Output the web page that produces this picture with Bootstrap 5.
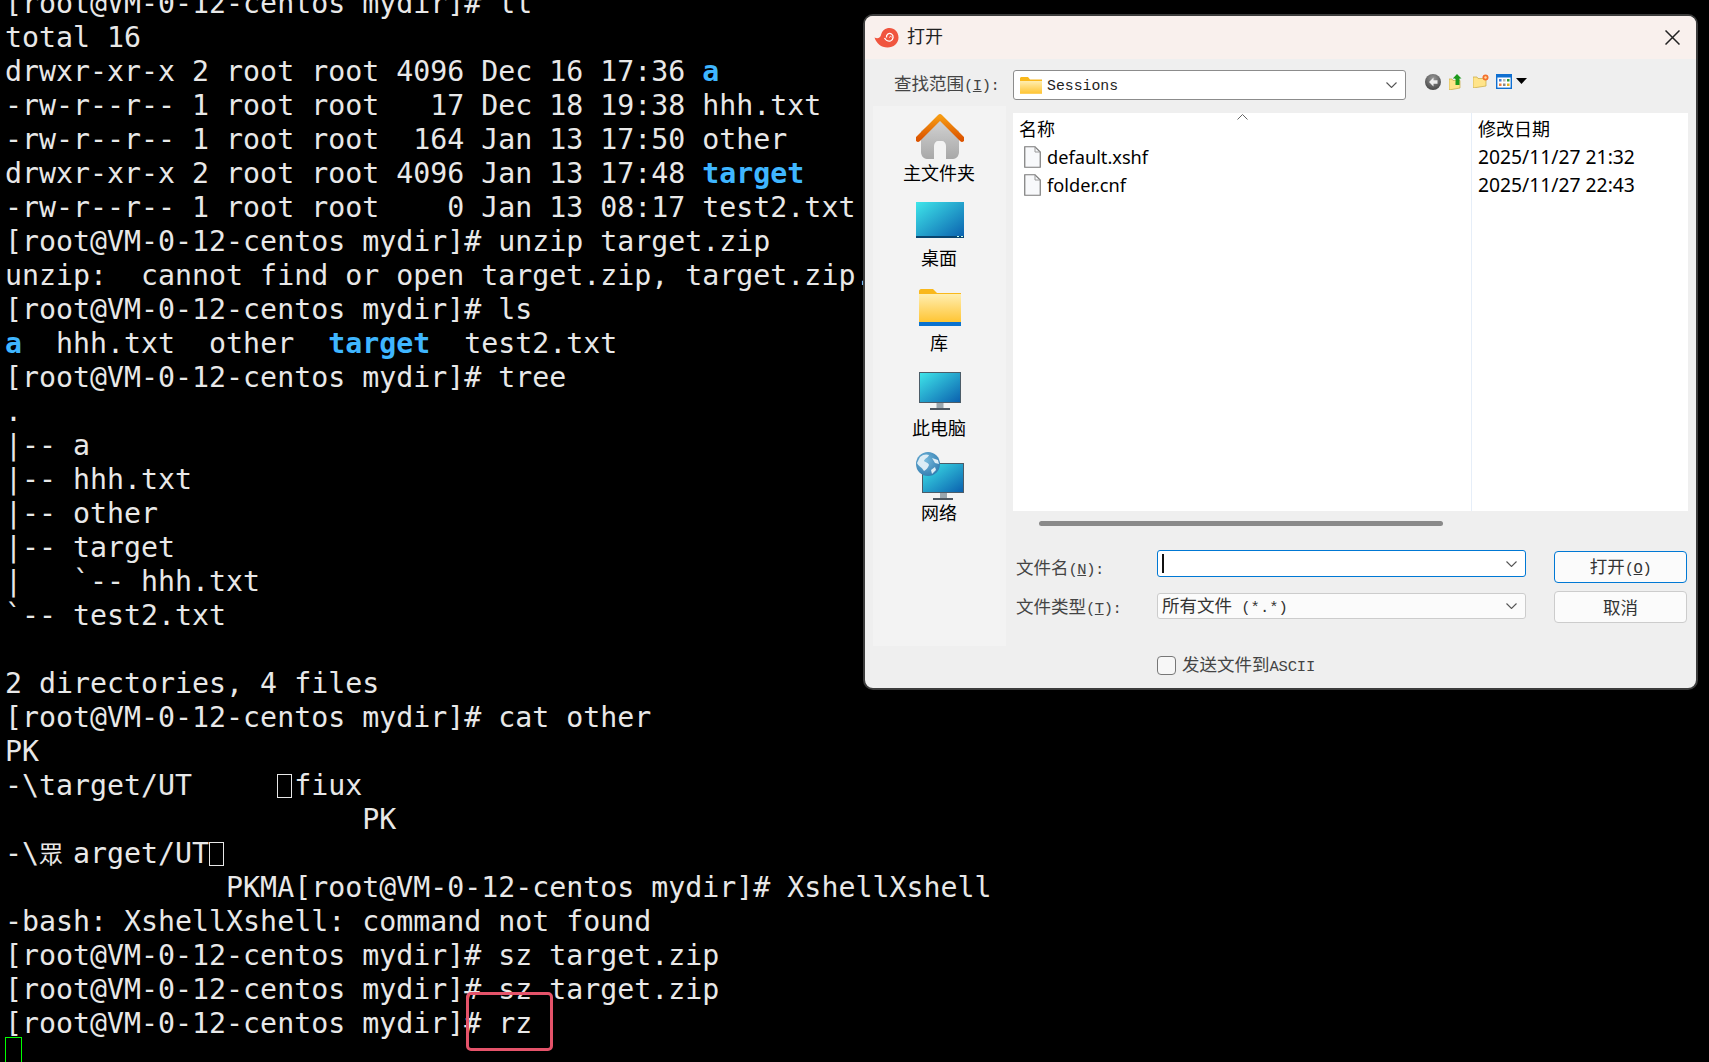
<!DOCTYPE html>
<html lang="zh">
<head>
<meta charset="utf-8">
<title>打开</title>
<link href="https://cdn.jsdelivr.net/npm/bootstrap@5.3.0/dist/css/bootstrap.min.css" rel="stylesheet">
<style>
html,body{margin:0;height:100%;background:#000;overflow:hidden}
.stage{position:relative;width:1709px;height:1062px;overflow:hidden;background:#000}
.term{margin:-13px 0 0 5px;padding:0;overflow:visible;font-family:"DejaVu Sans Mono","Liberation Mono",monospace;font-size:28.25px;line-height:34px;color:#e8e8e8;white-space:pre}
.term b{color:#3fb6ff;font-weight:700}
.tofu{display:inline-block;width:15px;height:24px;margin-right:2px;border:1.5px solid #e8e8e8;vertical-align:-3px}
.wide{display:inline-block;width:34px;font-family:"Noto Sans CJK SC",sans-serif;font-size:24px;line-height:1;text-align:left;vertical-align:0}
.cursor{display:block;width:17px;height:34px;margin:-4px 0 0 0;border:1px solid #0f0}
.redbox{position:absolute;left:466px;top:992px;width:87px;height:59px;border:3px solid #e5536a;border-radius:5px}
.dlg{position:absolute;left:863px;top:14px;width:835px;height:676px;border:2px solid #3c3c3c;border-radius:10px;background:#efefef;overflow:hidden;color:#000;font-family:"Noto Sans","Noto Sans CJK SC",sans-serif}
.titlebar{height:43px;background:#f9f0ed;padding:0 16px 0 9px;font-size:18px;color:#222}
.titlebar span{margin-left:8px;padding-bottom:5px;font-family:"Noto Sans CJK SC",sans-serif}
.lookup{height:47px;padding:11px 0 0 29px}
.lbl{font-family:"Noto Sans CJK SC",sans-serif;font-size:17.5px;color:#444;line-height:1;white-space:pre}
.lat{font-family:"Liberation Mono",monospace;font-size:15.5px;letter-spacing:-.5px}
.lookup .lbl{width:119px;padding-top:4px}
.combo{width:393px;height:30px;background:#fff;border:1.5px solid #8c8c8c;border-radius:3px;padding:0 8px 0 6px}
.combo .val{font-family:"Liberation Mono",monospace;font-size:14.8px;color:#222;margin-left:5px;padding-top:2px}
.tools{margin-left:19px;margin-top:4px;height:17px}
.t8{margin-left:8px}.t10{margin-left:10px}.t7{margin-left:7px}.t4{margin:4px 0 0 4px}
.mainrow{padding-left:8px;gap:7px}
.side{width:133px;height:540px;background:#f3f3f3;font-family:"Noto Sans CJK SC",sans-serif;font-size:18px;text-align:center}
.place{height:85px}
.place:first-child{height:80px}
.place svg{display:block}
.place div{line-height:25px;height:26px;padding-right:1px}
.gap1{margin-bottom:1px}.gap7{margin-bottom:7px}.gap4{margin-bottom:4px}.gap5{margin-bottom:5px}
.rightcol{width:675px;padding-top:7px}
.files{position:relative;height:398px;background:#fff}
.files .ncol{width:459px;border-right:1px solid #e6eef8;font-size:18.2px}
.files .dcol{padding-left:6px;flex:1;font-size:19.3px}
.hd{height:30px;line-height:30px;font-family:"Noto Sans CJK SC",sans-serif;font-size:18px}
.ncol .hd{padding-left:6px}
.frow{height:28px;line-height:28px;white-space:nowrap}
.ncol .frow{padding-left:11px}
.frow svg{margin-right:6px;flex:none}
.sortcaret{position:absolute;left:224px;top:1px}
.hscroll{width:404px;height:5px;margin:10px 0 0 26px;border-radius:3px;background:#8a8a8a}
.formarea{margin-top:24px;margin-left:3px}
.fcol{width:510px}
.frm{height:43px}
.frm .lbl{width:141px;padding-top:8px}
.frm.second .lbl{padding-top:4px}
.field{width:369px;height:27px;padding:0 8px 0 4px;border-radius:3px;background:#fff;border:1.5px solid #0078d4}
.field.sel{height:26px;background:#fbfbfb;border:1px solid #ccc;font-family:"Noto Sans CJK SC",sans-serif;font-size:17.5px;color:#333;white-space:pre}
.field.sel .lat{letter-spacing:0}
.caretline{display:block;width:1.5px;height:19px;background:#111}
.btncol{margin-left:28px;margin-top:1px;gap:8px;width:133px}
.winbtn{--bs-btn-padding-y:0;--bs-btn-padding-x:0;--bs-btn-border-radius:4px;--bs-btn-font-size:17.5px;--bs-btn-line-height:1;--bs-btn-bg:#fbfbfb;--bs-btn-color:#333;--bs-btn-border-color:#ccc;height:32px;font-family:"Noto Sans CJK SC",sans-serif}
.winbtn.primary{--bs-btn-border-color:#0078d4;border-width:1.5px}
.sendrow{margin:19px 0 0 144px}
.sendrow .form-check-input{width:19px;height:19px;margin:0 6px 0 0;border:1.5px solid #777;border-radius:4px;background-color:#f7f7f7}
.sendrow .lat{letter-spacing:-.2px}
</style>
</head>
<body>
<div class="stage">
<pre class="term">[root@VM-0-12-centos mydir]# ll
total 16
drwxr-xr-x 2 root root 4096 Dec 16 17:36 <b>a</b>
-rw-r--r-- 1 root root   17 Dec 18 19:38 hhh.txt
-rw-r--r-- 1 root root  164 Jan 13 17:50 other
drwxr-xr-x 2 root root 4096 Jan 13 17:48 <b>target</b>
-rw-r--r-- 1 root root    0 Jan 13 08:17 test2.txt
[root@VM-0-12-centos mydir]# unzip target.zip
unzip:  cannot find or open target.zip, target.zip.zip or target.zip.ZIP.
[root@VM-0-12-centos mydir]# ls
<b>a</b>  hhh.txt  other  <b>target</b>  test2.txt
[root@VM-0-12-centos mydir]# tree
.
|-- a
|-- hhh.txt
|-- other
|-- target
|   `-- hhh.txt
`-- test2.txt

2 directories, 4 files
[root@VM-0-12-centos mydir]# cat other
PK
-\target/UT     <span class="tofu"></span>fiux
                     PK
-\<span class="wide">眾</span>arget/UT<span class="tofu"></span>
             PKMA[root@VM-0-12-centos mydir]# XshellXshell
-bash: XshellXshell: command not found
[root@VM-0-12-centos mydir]# sz target.zip
[root@VM-0-12-centos mydir]# sz target.zip
[root@VM-0-12-centos mydir]# rz
<span class="cursor"></span></pre>
<div class="redbox"></div>

<svg width="0" height="0" class="position-absolute">
<defs>
<linearGradient id="scr" x1="0" y1="0" x2="1" y2="1"><stop offset="0" stop-color="#3fe6ea"/><stop offset="1" stop-color="#0a5fae"/></linearGradient>
<linearGradient id="fold" x1="0" y1="0" x2="0" y2="1"><stop offset="0" stop-color="#ffeeb0"/><stop offset="1" stop-color="#ffc534"/></linearGradient>
<linearGradient id="hous" x1="0" y1="0" x2="0" y2="1"><stop offset="0" stop-color="#d6d6d6"/><stop offset="1" stop-color="#a8a8a8"/></linearGradient>
<linearGradient id="roof" x1="0" y1="0" x2="0" y2="1"><stop offset="0" stop-color="#f59a12"/><stop offset="1" stop-color="#dc5400"/></linearGradient>
<radialGradient id="glob" cx=".4" cy=".35" r=".75"><stop offset="0" stop-color="#76b9dc"/><stop offset="1" stop-color="#2c77ac"/></radialGradient>
<radialGradient id="back" cx=".5" cy=".3" r=".8"><stop offset="0" stop-color="#999"/><stop offset="1" stop-color="#3c3c3c"/></radialGradient>
<symbol id="doc" viewBox="0 0 17 22"><path d="M.75.75H11L16.25 6V21.25H.75Z" fill="#f8f9fb" stroke="#7a7a7a" stroke-width="1.2"/><path d="M11 .75V6H16.25" fill="none" stroke="#9a9a9a" stroke-width="1"/></symbol>
<symbol id="chev" viewBox="0 0 11 6"><path d="M.5.5 5.5 5.5 10.500.5" fill="none" stroke="#555" stroke-width="1.1"/></symbol>
</defs>
</svg>

<div class="dlg d-flex flex-column">
  <div class="titlebar d-flex align-items-center flex-shrink-0">
    <svg width="25" height="20" viewBox="0 0 24 20"><path d="M0 9.500C3 11 6 10 6.500 7 7.500 2.500 11 0 15 0c5 0 9 4 9 9.500C24 15.500 19 19.500 13 19.500 6.500 19.500 2 15.500 0 9.500Z" fill="#f0553f"/><path d="M12 9.500C11.500 6.500 14.500 4.500 17 6 19.500 7.500 19 12 16 13 13.500 13.800 11 12 10 10" fill="none" stroke="#fff" stroke-width="1.300"/><path d="M15 9.500c0-1.500 2-1.500 2-.2" fill="none" stroke="#fff" stroke-width="1"/></svg>
    <span>打开</span>
    <svg class="ms-auto" width="15" height="15" viewBox="0 0 15 15"><path d="M.5.5 14.500 14.500M14.500.5.5 14.500" stroke="#222" stroke-width="1.500"/></svg>
  </div>

  <div class="lookup d-flex flex-shrink-0">
    <div class="lbl">查找范围<span class="lat">(<u>I</u>):</span></div>
    <div class="combo d-flex align-items-center">
      <svg width="22" height="17" viewBox="0 0 22 17"><path d="M0 1.500C0 .7.700 0 1.500 0H8L10 2.500H22V16.500H0Z" fill="#f9b81c"/><path d="M0 4H22V16.500H0Z" fill="url(#fold)"/></svg>
      <span class="val">Sessions</span>
      <svg class="ms-auto" width="11" height="6"><use href="#chev"/></svg>
    </div>
    <div class="tools d-flex align-items-start">
      <svg width="16" height="16" viewBox="0 0 16 16"><circle cx="8" cy="8" r="8" fill="url(#back)"/><path d="M8.500 3.500 4 8l4.500 4.500V9.700H12.500V6.300H8.500Z" fill="#eee"/></svg>
      <svg class="t8" width="14" height="16" viewBox="0 0 14 16"><path d="M0 5H3L4 6.500H11V14L0 16Z" fill="#ffe48a" stroke="#c9a93f" stroke-width=".7"/><path d="M8 0 12.500 4.500H10.500V11H6.500V8C6.500 6.500 7 5.500 6 4.500H3.800Z" fill="#1c9a1c"/></svg>
      <svg class="t10" width="16" height="14" viewBox="0 0 16 14"><path d="M0 3H4L5 4.500H13V12L0 14Z" fill="#ffe48a" stroke="#c9a93f" stroke-width=".7"/><circle cx="12.500" cy="3.500" r="3" fill="#f4702c"/><circle cx="12.500" cy="3.500" r="1.200" fill="#ffd9a0"/></svg>
      <svg class="t7" width="16" height="15" viewBox="0 0 16 15"><rect x=".7" y=".7" width="14.600" height="13.600" fill="#fff" stroke="#0f6fd1" stroke-width="1.400"/><rect x="1" y="1" width="14" height="2.500" fill="#0f6fd1"/><g fill="#4a7fd0"><rect x="3" y="5" width="2.500" height="2.500"/><rect x="3" y="9.500" width="2.500" height="2.500" fill="#f0803a"/><rect x="7" y="5" width="2.500" height="2.500" fill="#bbb"/><rect x="7" y="9.500" width="2.500" height="2.500" fill="#888"/><rect x="11" y="5" width="2.500" height="2.500" fill="#2a9a3a"/><rect x="11" y="9.500" width="2.500" height="2.500" fill="#e3b21e"/></g></svg>
      <svg class="t4" width="11" height="6" viewBox="0 0 11 6"><path d="M0 0H11L5.500 6Z" fill="#000"/></svg>
    </div>
  </div>

  <div class="mainrow d-flex align-items-start">
    <div class="side d-flex flex-column flex-shrink-0">
      <div class="place d-flex flex-column justify-content-end align-items-center">
        <svg class="gap1" width="48" height="45" viewBox="0 0 48 45"><path d="M5 17 24 3 43 17V38C43 41 41 45 37 45H30V32C30 29 28 27 26 27H22C20 27 18 29 18 32V45H11C7 45 5 41 5 38Z" fill="url(#hous)"/><path d="M2 25 24 3 46 25" fill="none" stroke="url(#roof)" stroke-width="5.500" stroke-linecap="round" stroke-linejoin="round"/></svg>
        <div>主文件夹</div>
      </div>
      <div class="place d-flex flex-column justify-content-end align-items-center">
        <svg class="gap7" width="48" height="36" viewBox="0 0 48 36"><rect width="48" height="36" fill="url(#scr)"/><rect y="34" width="48" height="2" fill="#08456f"/><rect x="41" y="34" width="2" height="1" fill="#cfe"/><rect x="45" y="34" width="2" height="1" fill="#cfe"/></svg>
        <div>桌面</div>
      </div>
      <div class="place d-flex flex-column justify-content-end align-items-center">
        <svg class="gap4" width="42" height="37" viewBox="0 0 42 37"><path d="M0 2C0 1 1 0 2 0H14L18 4H42V33H0Z" fill="#f9b81c"/><path d="M0 5H42V33H0Z" fill="url(#fold)"/><rect y="33" width="42" height="4" fill="#0a72cf"/></svg>
        <div>库</div>
      </div>
      <div class="place d-flex flex-column justify-content-end align-items-center">
        <svg class="gap5" width="42" height="38" viewBox="0 0 42 38"><rect x=".5" y=".5" width="41" height="30" fill="url(#scr)" stroke="#4c5c68"/><rect x="17.500" y="31" width="7" height="5" fill="#9aa6ae"/><rect x="11" y="36" width="20" height="2" fill="#4c5660"/></svg>
        <div>此电脑</div>
      </div>
      <div class="place d-flex flex-column justify-content-end align-items-center">
        <svg width="48" height="48" viewBox="0 0 48 48"><rect x="6.500" y="11.500" width="41" height="29" fill="url(#scr)" stroke="#4c5c68"/><rect x="24" y="41" width="7" height="5" fill="#9aa6ae"/><rect x="17" y="46" width="20" height="2" fill="#4c5660"/><circle cx="12" cy="12" r="12" fill="url(#glob)"/><path d="M4 5C7 2 11 2 13 3 12 6 9 6 8 9 10 11 12 10 13 13 12 16 10 18 8 19 6 15 2 14 1 11 2 9 3 7 4 5ZM16 6 22 8 23 12 19 11ZM15 18 19 15 20 18 16 22Z" fill="#dcecf5"/></svg>
        <div>网络</div>
      </div>
    </div>

    <div class="rightcol">
      <div class="files d-flex">
        <svg class="sortcaret" width="11" height="6" viewBox="0 0 11 6"><path d="M.5 5.500 5.500.5 10.500 5.500" fill="none" stroke="#666" stroke-width="1"/></svg>
        <div class="ncol">
          <div class="hd">名称</div>
          <div class="frow d-flex align-items-center"><svg width="17" height="22"><use href="#doc"/></svg>default.xshf</div>
          <div class="frow d-flex align-items-center"><svg width="17" height="22"><use href="#doc"/></svg>folder.cnf</div>
        </div>
        <div class="dcol">
          <div class="hd">修改日期</div>
          <div class="frow">2025/11/27 21:32</div>
          <div class="frow">2025/11/27 22:43</div>
        </div>
      </div>
      <div class="hscroll"></div>
      <div class="formarea d-flex">
        <div class="fcol">
          <div class="frm d-flex">
            <div class="lbl">文件名<span class="lat">(<u>N</u>):</span></div>
            <div class="field d-flex align-items-center"><span class="caretline"></span><svg class="ms-auto" width="11" height="6"><use href="#chev"/></svg></div>
          </div>
          <div class="frm second d-flex">
            <div class="lbl">文件类型<span class="lat">(<u>T</u>):</span></div>
            <div class="field sel d-flex align-items-center"><span>所有文件<span class="lat"> (*.*)</span></span><svg class="ms-auto" width="11" height="6"><use href="#chev"/></svg></div>
          </div>
        </div>
        <div class="btncol d-flex flex-column">
          <button type="button" class="btn winbtn primary">打开<span class="lat">(<u>O</u>)</span></button>
          <button type="button" class="btn winbtn">取消</button>
        </div>
      </div>
      <div class="sendrow d-flex align-items-center">
        <input class="form-check-input flex-shrink-0" type="checkbox" aria-label="发送文件到ASCII">
        <span class="lbl">发送文件到<span class="lat">ASCII</span></span>
      </div>
    </div>
  </div>
</div>
</div>
<script src="https://cdn.jsdelivr.net/npm/bootstrap@5.3.0/dist/js/bootstrap.bundle.min.js"></script>
</body>
</html>
